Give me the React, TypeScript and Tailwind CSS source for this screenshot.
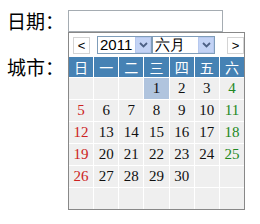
const weekdays = ['日', '一', '二', '三', '四', '五', '六']

// June 2011: the 1st falls on a Wednesday
const cells: (number | null)[] = [
  ...Array(3).fill(null),
  ...Array.from({ length: 30 }, (_, i) => i + 1),
]
while (cells.length < 42) cells.push(null)

function Chevron() {
  return (
    <svg width="9" height="6" viewBox="0 0 9 6" className="block">
      <path d="M1 1 L4.5 4.5 L8 1" fill="none" stroke="#4d6185" strokeWidth="1.8" />
    </svg>
  )
}

function FakeSelect({ value, width }: { value: string; width: string }) {
  return (
    <div className={`${width} h-[18px] border border-[#7f9db9] bg-white flex items-center justify-between`}>
      <span className="pl-[2px] text-[15px] leading-[16px] text-black">{value}</span>
      <span className="w-[16px] h-[16px] bg-[#c3d3f5] border border-[#b6c8ee] flex items-center justify-center">
        <Chevron />
      </span>
    </div>
  )
}

function dayColor(col: number) {
  if (col === 0) return 'text-[#cc2222]'
  if (col === 6) return 'text-[#228822]'
  return 'text-[#111]'
}

function Calendar() {
  return (
    <div className="absolute left-[68px] top-[32px] w-[177px] border border-[#888] bg-white">
      <div className="h-[24px] flex items-center font-['Liberation_Sans',sans-serif]">
        <div className="ml-[4px] w-[17px] h-[17px] border border-[#d4d4d4] flex items-center justify-center text-[13px] leading-none">&lt;</div>
        <div className="ml-[7px] flex">
          <FakeSelect value="2011" width="w-[55px]" />
          <FakeSelect value="六月" width="w-[63px]" />
        </div>
        <div className="ml-[12px] w-[17px] h-[17px] border border-[#d4d4d4] flex items-center justify-center text-[13px] leading-none">&gt;</div>
      </div>
      <div className="grid grid-cols-7 gap-px bg-white">
        {weekdays.map((d) => (
          <div key={d} className="h-[20px] bg-[#4682b4] text-white text-[14px] leading-[20px] text-center">
            {d}
          </div>
        ))}
        {cells.map((n, i) => (
          <div
            key={i}
            className={`h-[21px] ${n === 1 ? 'bg-[#b0c4de]' : 'bg-[#efefef]'} ${dayColor(i % 7)} text-[15px] leading-[21px] text-center font-['Liberation_Serif',serif]`}
          >
            {n ?? ''}
          </div>
        ))}
      </div>
    </div>
  )
}

export default function App() {
  return (
    <div className="relative w-[260px] h-[224px] bg-white text-black font-['Noto_Sans_CJK_SC',sans-serif]">
      <div className="pt-[10px] pl-[7px] flex flex-col gap-[24px]">
        <div className="flex items-center">
          <span className="w-[61px] text-[19px] leading-[22px]">日期：</span>
          <input className="w-[155px] h-[22px] border border-[#a5acb2] outline-none" />
        </div>
        <div className="flex items-center">
          <span className="w-[61px] text-[19px] leading-[22px]">城市：</span>
          <input className="w-[155px] h-[22px] border border-[#a5acb2] outline-none" />
        </div>
      </div>
      <Calendar />
    </div>
  )
}
